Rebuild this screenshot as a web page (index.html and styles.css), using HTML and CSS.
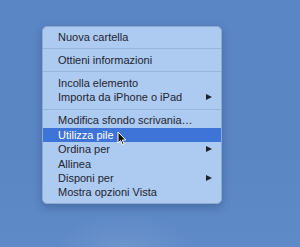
FILE: index.html
```html
<!DOCTYPE html>
<html lang="it">
<head>
    <meta charset="UTF-8">
    <meta name="viewport" content="width=device-width, initial-scale=1.0">
    <title>Scrivania</title>
    <link rel="stylesheet" href="styles.css">
</head>
<body>

    <div class="desktop">
        <ul class="context-menu">
            <li class="item">Nuova cartella</li>
            <li class="separator"></li>
            <li class="item">Ottieni informazioni</li>
            <li class="separator"></li>
            <li class="item">Incolla elemento</li>
            <li class="item has-sub">Importa da iPhone o iPad</li>
            <li class="separator"></li>
            <li class="item">Modifica sfondo scrivania…</li>
            <li class="item active">Utilizza pile
                <!-- mouse pointer -->
                <svg class="pointer" width="10" height="15" viewBox="0 0 10 15">
                    <path d="M1 1 L1 12 L3.6 9.6 L5.4 13.6 L7 12.9 L5.3 9 L8.8 9 Z" fill="#111" stroke="#fff" stroke-width="1" stroke-linejoin="round"/>
                </svg>
            </li>
            <li class="item has-sub">Ordina per</li>
            <li class="item">Allinea</li>
            <li class="item has-sub">Disponi per</li>
            <li class="item">Mostra opzioni Vista</li>
        </ul>
    </div>

</body>
</html>
```

FILE: styles.css
```css
body {
    margin: 0;
    height: 100vh;
    overflow: hidden;
    font-family: "Liberation Sans", Arial, sans-serif;
}

.desktop {
    height: 100%;
    padding: 26px 0 0 42px;
    box-sizing: border-box;
    background:
        radial-gradient(ellipse 70px 35px at 125px 250px, rgba(140, 170, 215, 0.35), transparent),
        linear-gradient(180deg, #5b86c5 0%, #5a86c4 60%, #5e8ac7 100%);
}

.context-menu {
    list-style: none;
    margin: 0;
    width: 180px;
    padding: 3px 0;
    box-sizing: border-box;
    background-color: #adcaf0;
    border: 1px solid #8eaad3;
    border-radius: 5px;
    box-shadow: 0 3px 8px rgba(30, 50, 90, 0.35);
}

.item {
    height: 14.4px;
    line-height: 14.4px;
    padding: 0 9px 0 15px;
    font-size: 11px;
    color: #1e2532;
    position: relative; /* for the submenu arrow and pointer */
    white-space: nowrap;
}

.item.has-sub::after {
    content: '';
    position: absolute;
    right: 9px;
    top: 4px;
    border-left: 6px solid #1c2330;
    border-top: 3.3px solid transparent;
    border-bottom: 3.3px solid transparent;
}

.item.active {
    background-color: #3e74d7;
    color: #fff;
}

.separator {
    height: 1px;
    margin: 4px 0 3.6px 0;
    background-color: #97b4dc;
}

.pointer {
    position: absolute;
    left: 74px;
    top: 3px;
}
```
